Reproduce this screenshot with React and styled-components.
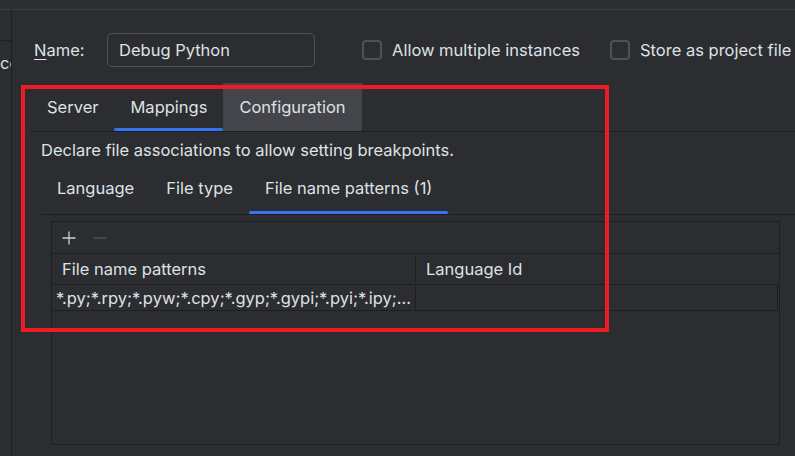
import styled, { createGlobalStyle } from 'styled-components';

const GlobalStyle = createGlobalStyle`
  html, body {
    margin: 0;
    padding: 0;
    background: #2b2d30;
  }
  body {
    font-family: Inter, 'Noto Sans', sans-serif;
    font-size: 16.5px;
    color: #dfe1e5;
  }
  * {
    box-sizing: border-box;
  }
`;

const Frame = styled.div`
  position: relative;
  width: 795px;
  height: 456px;
  overflow: hidden;
  display: flex;
  flex-direction: column;
  background: #2b2d30;
`;

const TopStrip = styled.div`
  height: 10px;
  flex-shrink: 0;
  border-bottom: 1px solid #393b40;
`;

const Body = styled.div`
  flex: 1;
  display: flex;
  min-height: 0;
`;

const Sidebar = styled.aside`
  width: 12px;
  flex-shrink: 0;
  border-right: 1px solid #1e1f22;
  overflow: hidden;
`;

const SidebarHead = styled.div`
  height: 31px;
  border-bottom: 1px solid #1e1f22;
`;

const SidebarItem = styled.div`
  height: 44px;
  display: flex;
  align-items: center;
  white-space: nowrap;
`;

const Main = styled.main`
  flex: 1;
  display: flex;
  flex-direction: column;
  padding-left: 19px;
  min-width: 0;
`;

const NameRow = styled.div`
  display: flex;
  align-items: center;
  margin-top: 23px;
  padding-left: 3px;
  height: 34px;
  white-space: nowrap;
`;

const Label = styled.label`
  width: 73px;
  flex-shrink: 0;
  u {
    text-decoration: underline;
    text-underline-offset: 3px;
  }
`;

const TextBox = styled.div`
  width: 208px;
  height: 34px;
  flex-shrink: 0;
  border: 1px solid #4e5157;
  border-radius: 5px;
  padding-left: 11px;
  display: flex;
  align-items: center;
`;

const CheckGroup = styled.div`
  display: flex;
  align-items: center;
  gap: 10px;
  flex-shrink: 0;
  margin-left: ${p => p.$gap}px;
`;

const Box = styled.span`
  width: 20px;
  height: 20px;
  border: 2px solid #4e5157;
  border-radius: 4px;
`;

const TabBar = styled.div`
  display: flex;
  margin-top: 16px;
  border-bottom: 1px solid #1e1f22;
`;

const Tab = styled.div`
  position: relative;
  height: ${p => p.$h}px;
  padding: 0 16px;
  display: flex;
  align-items: center;
  white-space: nowrap;
  background: ${p => (p.$hover ? '#43454a' : 'transparent')};
  &::after {
    content: '';
    display: ${p => (p.$active ? 'block' : 'none')};
    position: absolute;
    left: 0;
    right: 0;
    bottom: 0;
    height: 3px;
    border-radius: 2px;
    background: #3574f0;
  }
`;

const Content = styled.section`
  display: flex;
  flex-direction: column;
  padding-left: 10px;
`;

const Hint = styled.p`
  margin: 8px 0 0;
  line-height: 20px;
`;

const SubTabBar = styled.div`
  display: flex;
  margin-top: 2px;
  border-bottom: 1px solid #1e1f22;
`;

const Table = styled.div`
  margin: 6px 0 0 10px;
  width: 729px;
  height: 224px;
  border: 1px solid #1e1f22;
  display: flex;
  flex-direction: column;
`;

const Toolbar = styled.div`
  height: 32px;
  border-bottom: 1px solid #1e1f22;
  display: flex;
  align-items: center;
  gap: 17px;
  padding-left: 10px;
`;

const HeaderRow = styled.div`
  height: 31px;
  border-bottom: 1px solid #1e1f22;
  display: grid;
  grid-template-columns: 363px 1px 1fr;
  align-items: center;
`;

const HeadCell = styled.div`
  padding-left: 10px;
  white-space: nowrap;
`;

const ColDivider = styled.span`
  height: 26px;
  background: #1e1f22;
`;

const DataRow = styled.div`
  height: 26px;
  border-bottom: 1px solid #1e1f22;
  border-right: 1px solid #1e1f22;
  margin-right: 1px;
  display: grid;
  grid-template-columns: 364px 1fr;
`;

const DataCell = styled.div`
  padding-left: 4px;
  display: flex;
  align-items: center;
  white-space: nowrap;
  overflow: hidden;
  border-right: ${p => (p.$divider ? '1px solid #1e1f22' : 'none')};
`;

const Callout = styled.div`
  position: absolute;
  left: 21px;
  top: 85px;
  width: 588px;
  height: 247px;
  border: 4px solid #ed1c24;
  pointer-events: none;
`;

const PlusIcon = () => (
  <svg width="14" height="14" viewBox="0 0 14 14">
    <path d="M7 0.5V13.5M0.5 7H13.5" stroke="#ced0d6" strokeWidth="1.3" />
  </svg>
);

const MinusIcon = () => (
  <svg width="14" height="14" viewBox="0 0 14 14">
    <path d="M0.5 7H13.5" stroke="#55585e" strokeWidth="1.3" />
  </svg>
);

const App = () => {
  return (
    <Frame>
      <GlobalStyle />
      <TopStrip />
      <Body>
        <Sidebar>
          <SidebarHead />
          <SidebarItem>cc</SidebarItem>
        </Sidebar>
        <Main>
          <NameRow>
            <Label>
              <u>N</u>ame:
            </Label>
            <TextBox>Debug Python</TextBox>
            <CheckGroup $gap={47}>
              <Box />
              Allow multiple instances
            </CheckGroup>
            <CheckGroup $gap={30}>
              <Box />
              Store as project file
            </CheckGroup>
          </NameRow>

          <TabBar>
            <Tab $h={48}>Server</Tab>
            <Tab $h={48} $active>Mappings</Tab>
            <Tab $h={48} $hover>Configuration</Tab>
          </TabBar>

          <Content>
            <Hint>Declare file associations to allow setting breakpoints.</Hint>
            <SubTabBar>
              <Tab $h={52}>Language</Tab>
              <Tab $h={52}>File type</Tab>
              <Tab $h={52} $active>File name patterns (1)</Tab>
            </SubTabBar>

            <Table>
              <Toolbar>
                <PlusIcon />
                <MinusIcon />
              </Toolbar>
              <HeaderRow>
                <HeadCell>File name patterns</HeadCell>
                <ColDivider />
                <HeadCell>Language Id</HeadCell>
              </HeaderRow>
              <DataRow>
                <DataCell $divider>*.py;*.rpy;*.pyw;*.cpy;*.gyp;*.gypi;*.pyi;*.ipy;...</DataCell>
                <DataCell />
              </DataRow>
            </Table>
          </Content>
        </Main>
      </Body>
      <Callout />
    </Frame>
  );
};

export default App;
